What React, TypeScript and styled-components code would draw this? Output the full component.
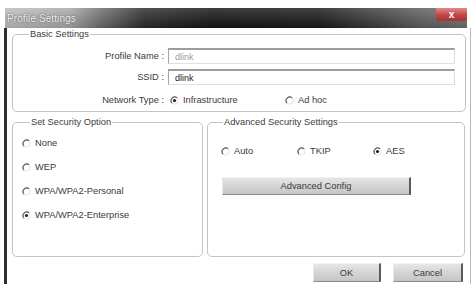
import React from "react";
import styled, { createGlobalStyle } from "styled-components";

const Global = createGlobalStyle`
  html, body { margin: 0; padding: 0; background: #ffffff; }
  body { width: 473px; height: 284px; overflow: hidden; font-family: "Liberation Sans", Arial, sans-serif; }
  * { box-sizing: border-box; }
`;

const Page = styled.div`
  width: 473px;
  height: 284px;
  padding: 8px 2px 0 4px;
  background: #fff;
  color: #3a3a3a;
  font-size: 9.3px;
`;

const Window = styled.div`
  display: flex;
  flex-direction: column;
  width: 467px;
  height: 276px;
`;

const TitleBar = styled.div`
  display: flex;
  align-items: flex-start;
  justify-content: space-between;
  height: 20px;
  margin-left: 1px;
  margin-right: 4px;
  background:
    linear-gradient(to bottom, rgba(255,255,255,0.18), rgba(0,0,0,0.12)),
    linear-gradient(to right, #bdbdbd 0%, #a6a6a6 14%, #6a6a6a 21%, #2a2a2a 30%, #141414 45%, #181818 68%, #3c3c3c 80%, #5c5c5c 90%, #6e6e6e 100%);
`;

const TitleText = styled.span`
  align-self: center;
  padding-left: 2px;
  font-size: 10px;
  color: #f4f4f4;
  text-shadow: 0 0 1px #555, 0 0 2px #777;
  letter-spacing: 0.1px;
`;

const CloseButton = styled.div`
  display: flex;
  align-items: center;
  justify-content: center;
  width: 31px;
  height: 13px;
  border-radius: 0 0 3px 3px;
  background: linear-gradient(to bottom, #e08a8a, #c24444 55%, #a83232);
  color: #fff;
  font-size: 10px;
  font-weight: bold;
  line-height: 1;
`;

const Frame = styled.div`
  flex: 1;
  display: flex;
  flex-direction: column;
  border-left: 3px solid #2e2e2e;
  border-right: 1px solid #b8b8b8;
  padding: 6px 4px 0 5px;
  background: #fff;
`;

const Group = styled.div<{ $w?: number; $h?: number }>`
  position: relative;
  border: 1px solid #c4c4c4;
  border-radius: 5px;
  ${(p) => (p.$w ? `width: ${p.$w}px;` : "")}
  ${(p) => (p.$h ? `height: ${p.$h}px;` : "")}
`;

const GroupLabel = styled.span<{ $left: number }>`
  position: absolute;
  top: -7px;
  left: ${(p) => p.$left}px;
  padding: 0 1px;
  background: #fff;
  color: #3c3c3c;
  line-height: 12px;
`;

const BasicGrid = styled.div`
  display: grid;
  grid-template-columns: 151px 287px;
  column-gap: 4px;
  row-gap: 5px;
  padding: 13px 9px 5px 0;
  align-items: center;
`;

const FieldLabel = styled.span`
  text-align: right;
  line-height: 12px;
  color: #3a3a3a;
`;

const TextBox = styled.div<{ $muted?: boolean }>`
  height: 16px;
  display: flex;
  align-items: center;
  padding-left: 6px;
  border-top: 2px solid #9c9c9c;
  border-left: 1px solid #a4a4a4;
  border-right: 1px solid #dcdcdc;
  border-bottom: 1px solid #e0e0e0;
  color: ${(p) => (p.$muted ? "#9a9a9a" : "#222")};
  font-size: 9px;
`;

const NetRow = styled.div`
  display: flex;
  align-items: center;
  padding-left: 2px;
  margin-top: 4px;
`;

const Option = styled.label<{ $w?: number }>`
  display: flex;
  align-items: center;
  gap: 4px;
  height: 12px;
  ${(p) => (p.$w ? `width: ${p.$w}px;` : "")}
  color: #3a3a3a;
  white-space: nowrap;
`;

const Lower = styled.div`
  display: flex;
  gap: 4px;
  margin-top: 10px;
`;

const SecurityList = styled.div`
  display: flex;
  flex-direction: column;
  gap: 12px;
  padding: 14px 0 0 9px;
`;

const AdvBody = styled.div`
  display: flex;
  flex-direction: column;
  padding: 22px 0 0 13px;
`;

const RadioRow = styled.div`
  display: flex;
  align-items: center;
`;

const Button = styled.div<{ $w: number; $h: number }>`
  display: flex;
  align-items: center;
  justify-content: center;
  width: ${(p) => p.$w}px;
  height: ${(p) => p.$h}px;
  background: linear-gradient(to bottom, #e6e6e6 0%, #d6d6d6 45%, #c6c6c6 100%);
  border-top: 1px solid #f2f2f2;
  border-left: 1px solid #e8e8e8;
  border-right: 2px solid #5a5a5a;
  border-bottom: 1px solid #8a8a8a;
  color: #3a3a3a;
  font-size: 9.3px;
`;

const AdvButton = styled(Button)`
  margin-top: 20px;
  margin-left: 1px;
`;

const Footer = styled.div`
  display: flex;
  justify-content: flex-end;
  gap: 12px;
  padding: 6px 3px 0 0;
`;

function Radio({ checked }: { checked?: boolean }) {
  return (
    <svg width="9" height="9" viewBox="0 0 9 9" aria-hidden>
      <circle cx="4.5" cy="4.5" r="3.7" fill="#fff" stroke="#e2e2e2" strokeWidth="1" />
      <path d="M7.1 1.9 A3.7 3.7 0 0 0 1.9 7.1" fill="none" stroke="#5c5c5c" strokeWidth="1.2" />
      {checked && <circle cx="4.5" cy="4.5" r="1.6" fill="#222" />}
    </svg>
  );
}

function RadioOption({ label, checked, w }: { label: string; checked?: boolean; w?: number }) {
  return (
    <Option $w={w}>
      <Radio checked={checked} />
      <span>{label}</span>
    </Option>
  );
}

export default function App() {
  return (
    <>
      <Global />
      <Page>
        <Window>
          <TitleBar>
            <TitleText>Profile Settings</TitleText>
            <CloseButton>x</CloseButton>
          </TitleBar>
          <Frame>
            <Group>
              <GroupLabel $left={16}>Basic Settings</GroupLabel>
              <BasicGrid>
                <FieldLabel>Profile Name :</FieldLabel>
                <TextBox $muted>dlink</TextBox>
                <FieldLabel>SSID :</FieldLabel>
                <TextBox>dlink</TextBox>
                <FieldLabel style={{ marginTop: 4 }}>Network Type :</FieldLabel>
                <NetRow>
                  <RadioOption label="Infrastructure" checked w={115} />
                  <RadioOption label="Ad hoc" />
                </NetRow>
              </BasicGrid>
            </Group>
            <Lower>
              <Group $w={191} $h={135}>
                <GroupLabel $left={17}>Set Security Option</GroupLabel>
                <SecurityList>
                  <RadioOption label="None" />
                  <RadioOption label="WEP" />
                  <RadioOption label="WPA/WPA2-Personal" />
                  <RadioOption label="WPA/WPA2-Enterprise" checked />
                </SecurityList>
              </Group>
              <Group $w={258} $h={135}>
                <GroupLabel $left={15}>Advanced Security Settings</GroupLabel>
                <AdvBody>
                  <RadioRow>
                    <RadioOption label="Auto" w={76} />
                    <RadioOption label="TKIP" w={76} />
                    <RadioOption label="AES" checked />
                  </RadioRow>
                  <AdvButton $w={189} $h={18}>Advanced Config</AdvButton>
                </AdvBody>
              </Group>
            </Lower>
            <Footer>
              <Button $w={68} $h={19}>OK</Button>
              <Button $w={70} $h={19}>Cancel</Button>
            </Footer>
          </Frame>
        </Window>
      </Page>
    </>
  );
}
